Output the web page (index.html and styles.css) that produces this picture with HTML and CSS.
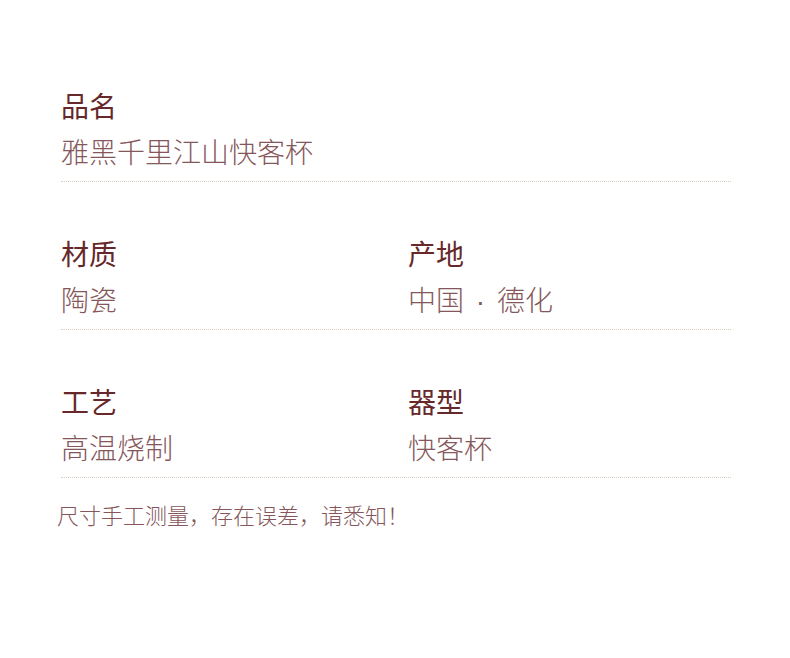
FILE: index.html
```html
<!DOCTYPE html>
<html lang="zh-CN">
<head>
<meta charset="utf-8">
<title>产品信息</title>
<link rel="stylesheet" href="styles.css">
</head>
<body>
<main class="spec">
  <section class="row">
    <div class="cell">
      <h2 class="label">品名</h2>
      <p class="value">雅黑千里江山快客杯</p>
    </div>
  </section>
  <section class="row two">
    <div class="cell">
      <h2 class="label">材质</h2>
      <p class="value">陶瓷</p>
    </div>
    <div class="cell">
      <h2 class="label">产地</h2>
      <p class="value">中国<span class="dot"> · </span>德化</p>
    </div>
  </section>
  <section class="row two">
    <div class="cell">
      <h2 class="label">工艺</h2>
      <p class="value">高温烧制</p>
    </div>
    <div class="cell">
      <h2 class="label">器型</h2>
      <p class="value">快客杯</p>
    </div>
  </section>
  <p class="note">尺寸手工测量，存在误差，请悉知！</p>
</main>
</body>
</html>
```

FILE: styles.css
```css
html, body {
  margin: 0;
  padding: 0;
  background: #ffffff;
}

body {
  font-family: "Noto Sans CJK SC", "Noto Sans", sans-serif;
}

.spec {
  width: 670px;
  padding: 34px 0 0 61px;
}

.row {
  display: grid;
  grid-template-columns: 1fr;
  padding: 51px 0 10px;
  border-bottom: 1px dotted #dacdbd;
}

.row.two {
  grid-template-columns: 347px 1fr;
}

.label {
  margin: 0;
  font-size: 28px;
  line-height: 40px;
  font-weight: 400;
  color: #66282a;
}

.value {
  margin: 6px 0 0;
  height: 40px;
  font-size: 28px;
  line-height: 40px;
  font-weight: 200;
  color: #85575a;
}

.dot {
  font-family: "Liberation Sans", sans-serif;
  font-size: 28px;
  line-height: 0;
  padding: 0 4px;
}

.note {
  margin: 21px 0 0 -4px;
  font-size: 22px;
  line-height: 30px;
  font-weight: 200;
  color: #85575a;
}
```
